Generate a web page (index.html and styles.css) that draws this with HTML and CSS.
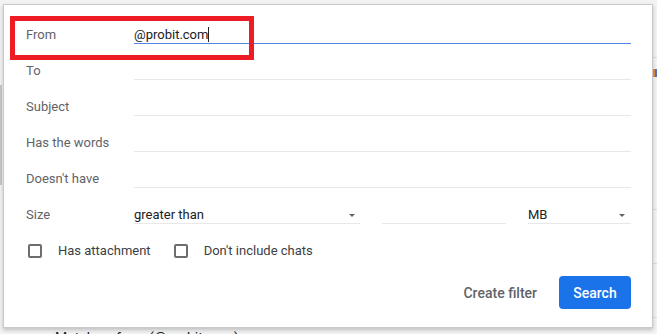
FILE: index.html
```html
<!DOCTYPE html>
<html lang="en">
<head>
<meta charset="utf-8">
<title>Search filter</title>
<link rel="stylesheet" href="styles.css">
</head>
<body>
<div class="page">
  <div class="backdrop">
    <div class="scroll-thumb"></div>
    <div class="side-line l1"></div>
    <div class="side-line l2"></div>
    <div class="side-line l3"></div>
    <div class="side-line l4"></div>
    <div class="side-icon"></div>
  </div>

  <div class="dialog">
    <div class="row">
      <span class="label">From</span>
      <div class="field focused"><span class="value">@probit.com</span><span class="caret"></span></div>
    </div>
    <div class="row">
      <span class="label">To</span>
      <div class="field"></div>
    </div>
    <div class="row">
      <span class="label">Subject</span>
      <div class="field"></div>
    </div>
    <div class="row">
      <span class="label">Has the words</span>
      <div class="field"></div>
    </div>
    <div class="row">
      <span class="label">Doesn't have</span>
      <div class="field"></div>
    </div>
    <div class="row">
      <span class="label">Size</span>
      <div class="size">
        <div class="field select op"><span class="value">greater than</span><span class="arrow"></span></div>
        <div class="field num"></div>
        <div class="field select unit"><span class="value">MB</span><span class="arrow"></span></div>
      </div>
    </div>
    <div class="checks">
      <span class="box"></span><span class="check-label">Has attachment</span>
      <span class="box second"></span><span class="check-label">Don't include chats</span>
    </div>
    <div class="actions">
      <button class="btn-text">Create filter</button>
      <button class="btn-primary">Search</button>
    </div>
  </div>
  <div class="matches">Matches: from:(@probit.com)</div>

  <div class="annot"></div>
</div>
</body>
</html>
```

FILE: styles.css
```css
html, body {
  margin: 0;
  padding: 0;
}
body {
  background: #f3f3f3;
  font-family: Roboto, "Liberation Sans", Arial, sans-serif;
  overflow: hidden;
  width: 657px;
  height: 334px;
}
.page {
  position: relative;
  width: 657px;
  height: 334px;
  padding-top: 4px;
  box-sizing: border-box;
}

/* background page bits peeking out */
.backdrop .scroll-thumb {
  position: absolute;
  left: 0;
  top: 85px;
  width: 2px;
  height: 100px;
  background: #c8c8c8;
}
.backdrop .side-line {
  position: absolute;
  left: 653px;
  width: 4px;
  height: 1px;
  background: #dcdcdc;
}
.backdrop .l1 { top: 57px; }
.backdrop .l2 { top: 209px; }
.backdrop .l3 { top: 263px; }
.backdrop .l4 { top: 317px; }
.backdrop .side-icon {
  position: absolute;
  left: 653px;
  top: 69px;
  width: 4px;
  height: 8px;
  background: linear-gradient(to right, #b9a27a 0 1px, #e0873a 1px 2px, #5a6fb8 2px 4px);
}

.dialog {
  position: relative;
  margin-left: 3px;
  width: 650px;
  box-sizing: border-box;
  background: #fff;
  border: 1px solid #c9c9c9;
  box-shadow: 0 2px 4px rgba(0, 0, 0, 0.22);
  padding: 3px 21px 18px 22px;
}

.row {
  display: flex;
  align-items: flex-end;
  height: 36px;
}
.label {
  width: 108px;
  flex: none;
  font-size: 13px;
  line-height: 15px;
  color: #5f6368;
  padding-bottom: 2px;
}
.field {
  flex: 1;
  height: 36px;
  box-sizing: border-box;
  border-bottom: 1px solid #e8e8e8;
  padding-bottom: 1px;
  display: flex;
  align-items: flex-end;
  font-size: 13px;
  line-height: 15px;
  color: #202124;
}
.field.focused {
  border-bottom-color: #4f86e3;
}
.caret {
  display: inline-block;
  width: 1px;
  height: 15px;
  background: #202124;
  margin-left: 0;
}

.size {
  flex: 1;
  display: flex;
  gap: 22px;
}
.select {
  justify-content: space-between;
}
.select .arrow {
  width: 0;
  height: 0;
  border-left: 3.5px solid transparent;
  border-right: 3.5px solid transparent;
  border-top: 3.5px solid #5f6368;
  margin-bottom: 5px;
}
.op { flex: none; width: 226px; padding-right: 5px; }
.num { flex: none; width: 124px; }
.unit { flex: none; width: 103px; padding-right: 6px; }

.checks {
  display: flex;
  align-items: center;
  height: 22px;
  margin-top: 16px;
  font-size: 13px;
  color: #3c4043;
}
.box {
  width: 14px;
  height: 14px;
  box-sizing: border-box;
  border: 2px solid #6b6d70;
  border-radius: 2px;
  margin-left: 2px;
  margin-right: 16px;
}
.box.second {
  margin-left: 23px;
}
.check-label {
  line-height: 15px;
  padding-bottom: 1px;
}

.actions {
  display: flex;
  justify-content: flex-end;
  align-items: center;
  margin-top: 14px;
  gap: 22px;
}
.btn-text {
  border: 0;
  background: none;
  padding: 0;
  font-family: Roboto, "Liberation Sans", Arial, sans-serif;
  font-size: 14px;
  font-weight: 500;
  color: #5f6368;
}
.btn-primary {
  width: 72px;
  height: 33px;
  border: 0;
  border-radius: 4px;
  background: #1a73e8;
  color: #fff;
  font-family: Roboto, "Liberation Sans", Arial, sans-serif;
  font-size: 14px;
  font-weight: 500;
  padding: 0;
}

.matches {
  margin-top: 3px;
  padding-left: 55px;
  font-size: 14px;
  line-height: 14px;
  color: #202124;
  white-space: nowrap;
}

.annot {
  position: absolute;
  left: 10px;
  top: 16px;
  width: 244px;
  height: 44px;
  box-sizing: border-box;
  border: 5px solid #ed1c24;
}
```
